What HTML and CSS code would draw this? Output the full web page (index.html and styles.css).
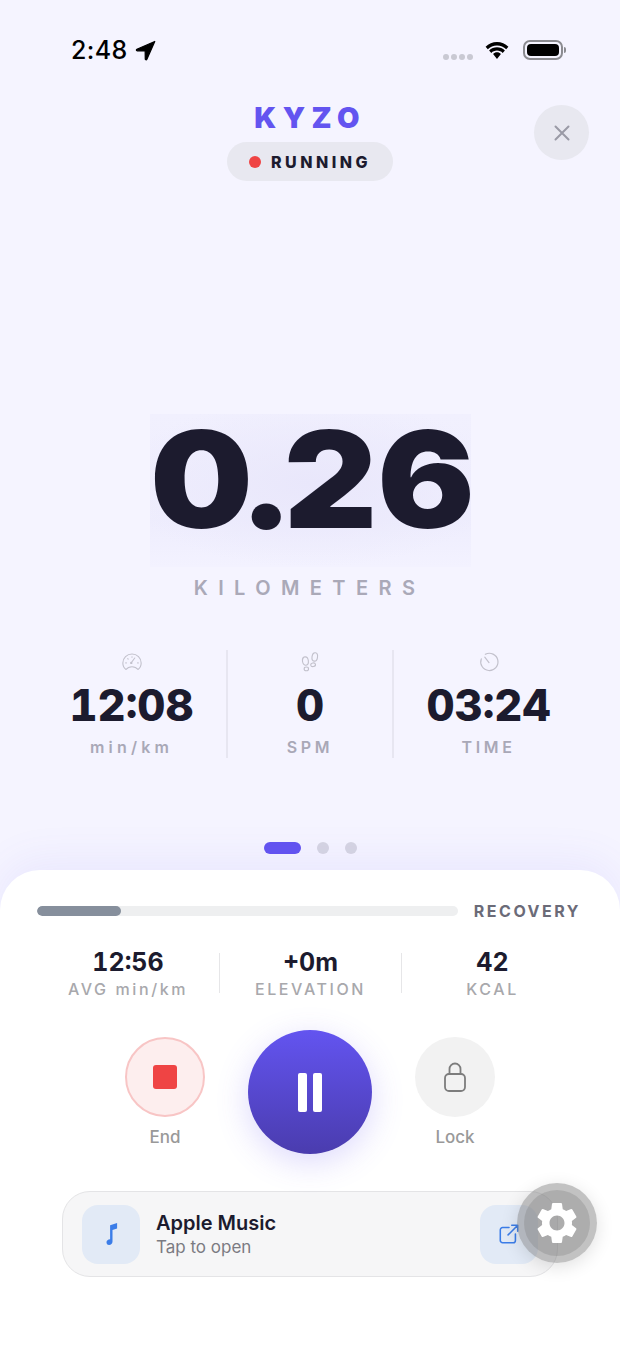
FILE: index.html
```html
<!DOCTYPE html>
<html lang="en">
<head>
<meta charset="utf-8">
<title>Kyzo run</title>
<link rel="stylesheet" href="styles.css">
</head>
<body>
<div class="page">
  <div class="status">
    <div class="status-left">
      <span class="clock">2:48</span>
      <svg class="loc" viewBox="0 0 20 20"><path d="M18.800 1.400 1.800 8.800c-.8.400-.6 1.500.3 1.500l7.600.1.100 7.600c0 .9 1.100 1.100 1.500.3Z" fill="#000" stroke="#000" stroke-width="1.200" stroke-linejoin="round"/></svg>
    </div>
    <div class="status-right">
      <div class="signal"><i></i><i></i><i></i><i></i></div>
      <svg class="wifi" viewBox="0 0 26 19"><path d="M13 4.600c3.600 0 6.800 1.400 9.200 3.700l2.200-2.500C21.400 2.800 17.400 1 13 1S4.600 2.800 1.600 5.800l2.200 2.500C6.200 6 9.400 4.600 13 4.600Z" fill="#000"/><path d="M13 9.600c2.200 0 4.200.9 5.700 2.300l2.200-2.500C18.800 7.400 16 6.200 13 6.200S7.200 7.400 5.100 9.400l2.200 2.500C8.800 10.500 10.800 9.600 13 9.600Z" fill="#000"/><path d="M13 11.300c-1.500 0-2.900.6-3.900 1.600L13 18l3.900-5.100c-1-1-2.400-1.600-3.900-1.600Z" fill="#000"/></svg>
      <div class="battery"><div class="battery-body"><div class="battery-fill"></div></div><div class="battery-nub"></div></div>
    </div>
  </div>

  <header class="head">
    <div class="head-side"></div>
    <div class="head-center">
      <div class="brand">KYZO</div>
      <div class="pill"><span class="pill-dot"></span><span class="pill-text">RUNNING</span></div>
    </div>
    <div class="head-side head-end">
      <button class="close" aria-label="Close">
        <svg viewBox="0 0 16 16" class="close-x"><path d="M1.500 1.500l13 13M14.500 1.500l-13 13" stroke="#9a9aa6" stroke-width="2" stroke-linecap="round" fill="none"/></svg>
      </button>
    </div>
  </header>

  <main class="main">
    <div class="distance"><span class="distance-text">0<span class="point">.</span>26</span></div>
    <div class="unit">KILOMETERS</div>
    <div class="stats">
      <div class="stat stat-a">
        <svg class="stat-icon" viewBox="0 0 24 24"><g fill="none" stroke="#c2c1cc" stroke-width="1.200" stroke-linecap="round" stroke-linejoin="round"><path d="M5.500 20.200C3.400 18.600 2 15.900 2 13 2 7.500 6.500 3.200 12 3.200S22 7.500 22 13c0 2.900-1.400 5.600-3.500 7.200-1.400-1.900-3.800-3.100-6.500-3.100s-5.100 1.200-6.500 3.100Z"/><path d="M11.400 12.600 15 7.600"/><circle cx="11.200" cy="13" r=".7"/><path d="M5.200 13h.6M18.200 13h.6M7.400 8.400l.4.4M12 6.200v.6"/></g></svg>
        <div class="stat-value">12:08</div>
        <div class="stat-label lower">min/km</div>
      </div>
      <div class="stat stat-b">
        <svg class="stat-icon" viewBox="0 0 24 24"><g fill="none" stroke="#c2c1cc" stroke-width="1.200"><ellipse cx="7" cy="11" rx="3.200" ry="4.600" transform="rotate(-8 7 11)"/><ellipse cx="8" cy="19.500" rx="2.400" ry="2"/><ellipse cx="17.200" cy="6.500" rx="3" ry="4.600" transform="rotate(8 17.200 6.500)"/><ellipse cx="15.400" cy="15" rx="2.600" ry="2" transform="rotate(-12 15.400 15)"/></g></svg>
        <div class="stat-value">0</div>
        <div class="stat-label">SPM</div>
      </div>
      <div class="stat stat-c">
        <svg class="stat-icon" viewBox="0 0 24 24"><g fill="none" stroke="#c2c1cc" stroke-width="1.300" stroke-linecap="round"><path d="M8 3.600a9.400 9.400 0 1 1-4.400 5"/><path d="M12 12.600 7.400 6.800"/></g></svg>
        <div class="stat-value">03:24</div>
        <div class="stat-label">TIME</div>
      </div>
    </div>
    <div class="pager"><span class="pager-on"></span><span class="pager-dot"></span><span class="pager-dot"></span></div>
  </main>

  <section class="sheet">
    <div class="progress-row">
      <div class="track"><div class="track-fill"></div></div>
      <div class="progress-label">RECOVERY</div>
    </div>
    <div class="minis">
      <div class="mini"><div class="mini-value">12:56</div><div class="mini-label">AVG min/km</div></div>
      <div class="mini"><div class="mini-value">+0m</div><div class="mini-label">ELEVATION</div></div>
      <div class="mini"><div class="mini-value">42</div><div class="mini-label">KCAL</div></div>
    </div>
    <div class="controls">
      <div class="ctrl">
        <button class="round round-end" aria-label="End"><span class="stop"></span></button>
        <div class="ctrl-label">End</div>
      </div>
      <button class="pause" aria-label="Pause"><span class="bar"></span><span class="bar"></span></button>
      <div class="ctrl">
        <button class="round round-lock" aria-label="Lock">
          <svg class="lock" viewBox="0 0 24 32"><g fill="none" stroke="#7d7d7d" stroke-width="1.800"><rect x="2" y="13" width="20" height="17" rx="4"/><path d="M6.500 13V8a5.500 5.500 0 0 1 11 0v5"/></g></svg>
        </button>
        <div class="ctrl-label">Lock</div>
      </div>
    </div>
    <div class="music">
      <div class="tile">
        <svg class="note" viewBox="0 0 14 24"><path d="M5.600 3.200 12.600 1v5.600L8 8v11.500c0 2-1.600 3.500-3.400 3.500S2 21.800 2 20.200s1.500-3 3.600-3Z" fill="#3b7de8"/></svg>
      </div>
      <div class="music-text">
        <div class="music-title">Apple Music</div>
        <div class="music-sub">Tap to open</div>
      </div>
      <div class="tile">
        <svg class="ext" viewBox="0 0 24 24"><g fill="none" stroke="#3b7de8" stroke-width="1.700" stroke-linecap="round" stroke-linejoin="round"><path d="M12 5H5a2.500 2.500 0 0 0-2.500 2.500V19A2.500 2.500 0 0 0 5 21.500h11.500A2.500 2.500 0 0 0 19 19v-7"/><path d="M11 13 21.500 2.500M15 2.500h6.500V9"/></g></svg>
      </div>
    </div>
    <div class="assist">
      <div class="assist-inner">
        <svg class="gear" viewBox="0 0 24 24"><path fill="#fff" d="M19.14 12.94c.04-.3.06-.61.06-.94 0-.32-.02-.64-.07-.94l2.03-1.58c.18-.14.23-.41.12-.61l-1.92-3.32c-.12-.22-.37-.29-.59-.22l-2.39.96c-.5-.38-1.03-.7-1.62-.94l-.36-2.54c-.04-.24-.24-.41-.48-.41h-3.84c-.24 0-.43.17-.47.41l-.36 2.54c-.59.24-1.13.57-1.62.94l-2.39-.96c-.22-.08-.47 0-.59.22L2.74 8.87c-.12.21-.08.47.12.61l2.03 1.58c-.05.3-.09.63-.09.94s.02.64.07.94l-2.03 1.58c-.18.14-.23.41-.12.61l1.92 3.32c.12.22.37.29.59.22l2.39-.96c.5.38 1.03.7 1.62.94l.36 2.54c.05.24.24.41.48.41h3.84c.24 0 .44-.17.47-.41l.36-2.54c.59-.24 1.13-.56 1.62-.94l2.39.96c.22.08.47 0 .59-.22l1.92-3.32c.12-.22.07-.47-.12-.61l-2.01-1.58zM12 15.600c-1.980 0-3.600-1.620-3.600-3.600s1.620-3.600 3.600-3.600 3.600 1.620 3.600 3.600-1.620 3.600-3.600 3.600z"/></svg>
      </div>
    </div>
  </section>
</div>
</body>
</html>
```

FILE: styles.css
```css
* { box-sizing: border-box; }
html, body { margin: 0; padding: 0; }
body { font-family: Inter, "Liberation Sans", sans-serif; background: #f5f4ff; }
button { border: 0; padding: 0; font: inherit; cursor: pointer; }

.page {
  width: 620px;
  height: 1348px;
  display: flex;
  flex-direction: column;
  overflow: hidden;
  background: #f5f4ff;
}

/* status bar */
.status {
  height: 99px;
  padding: 36px 54px 0 71px;
  display: flex;
  justify-content: space-between;
  align-items: flex-start;
  flex: none;
}
.status-left { display: flex; align-items: center; gap: 7px; }
.clock { font-size: 25px; font-weight: 500; line-height: 28px; letter-spacing: 0.4px; color: #000; }
.loc { width: 21px; height: 21px; margin-top: 1px; }
.status-right { display: flex; align-items: flex-start; margin-top: 4px; }
.signal { display: flex; gap: 2px; margin-top: 14px; margin-right: 11px; }
.signal i { width: 6px; height: 6px; border-radius: 50%; background: #c9c9d3; }
.wifi { width: 26px; height: 19px; margin-top: 1px; margin-right: 13px; }
.battery { display: flex; align-items: center; }
.battery-body { width: 40px; height: 20px; border: 2px solid #8b8b90; border-radius: 7px; padding: 2px; }
.battery-fill { height: 100%; border-radius: 4px; background: #000; }
.battery-nub { width: 2px; height: 6px; margin-left: 1px; border-radius: 0 2px 2px 0; background: #8b8b90; }

/* header */
.head { display: grid; grid-template-columns: 1fr auto 1fr; flex: none; }
.head-center { display: flex; flex-direction: column; align-items: center; }
.head-end { display: flex; justify-content: flex-end; padding-right: 31px; padding-top: 6px; }
.brand { font-size: 29px; font-weight: 900; line-height: 36px; letter-spacing: 6.3px; color: #6354f0; margin-top: 1px; }
.pill {
  margin-top: 6px;
  height: 39px;
  width: 166px;
  border-radius: 20px;
  background: #e8e8f0;
  display: flex;
  align-items: center;
  gap: 10px;
  padding-left: 22px;
}
.pill-dot { width: 12px; height: 12px; border-radius: 50%; background: #ef4444; }
.pill-text { font-size: 16px; font-weight: 800; letter-spacing: 3.5px; color: #1c1b2e; }
.close {
  width: 55px;
  height: 55px;
  border-radius: 50%;
  background: #e8e8f0;
  display: flex;
  align-items: center;
  justify-content: center;
}
.close-x { width: 16px; height: 16px; }

/* main */
.main { flex: 1; display: flex; flex-direction: column; align-items: center; min-height: 0; }
.distance {
  margin-top: 233px;
  width: 321px;
  height: 153px;
  padding: 0 0 23px 4px;
  font-size: 134px;
  line-height: 130px;
  font-weight: 900;
  text-align: center;
  white-space: nowrap;
  color: #1c1b2e;
  background:
    radial-gradient(ellipse 60% 55% at 50% 45%, #e9e7fb 0%, rgba(233, 231, 251, 0) 100%),
    linear-gradient(180deg, #f1f0fe 0%, #eeedfd 70%, #f3f2ff 100%);
}
.distance-text { display: inline-block; transform: scaleX(1.08); }
.point { margin: 0 -9px 0 -12.5px; }
.unit {
  margin-top: 9px;
  font-size: 20px;
  line-height: 24px;
  font-weight: 600;
  letter-spacing: 10.4px;
  color: #aaa9b8;
  margin-right: 1px;
}
.stats { margin-top: 50px; width: 546px; display: grid; grid-template-columns: 189px 168px 189px; height: 108px; }
.stat { display: flex; flex-direction: column; align-items: center; }
.stat-b { border-left: 2px solid #e7e6f1; border-right: 2px solid #e7e6f1; }
.stat-icon { width: 22px; height: 22px; margin-top: 1px; }
.stat-value { font-size: 43.5px; line-height: 52px; font-weight: 800; font-variant-numeric: tabular-nums; color: #1c1b2e; margin-top: 6px; white-space: nowrap; }
.stat-label { font-size: 16px; line-height: 20px; font-weight: 600; letter-spacing: 3.6px; color: #a9a8b7; margin-top: 6px; }
.stat-label.lower { letter-spacing: 4.2px; }
.pager { margin-top: 84px; display: flex; align-items: center; gap: 16px; }
.pager-on { width: 37px; height: 12px; border-radius: 6px; background: #6354f0; }
.pager-dot { width: 12px; height: 12px; border-radius: 50%; background: #d6d5e2; }

/* sheet */
.sheet {
  position: relative;
  flex: none;
  height: 478px;
  background: #fff;
  border-radius: 40px 40px 0 0;
  box-shadow: 0 -10px 40px rgba(99, 84, 240, 0.08);
  padding-top: 36px;
}
.progress-row { display: flex; align-items: center; gap: 16px; padding: 0 39px 0 37px; height: 10px; }
.track { flex: 1; height: 10px; border-radius: 5px; background: #eeeff0; overflow: hidden; }
.track-fill { width: 20%; height: 100%; border-radius: 5px; background: #868f9c; }
.progress-label { font-size: 16px; line-height: 20px; font-weight: 700; letter-spacing: 2.5px; color: #6b6b78; }
.minis { margin: 33px 37px 0; display: grid; grid-template-columns: repeat(3, 182px); height: 50px; }
.mini { display: flex; flex-direction: column; align-items: center; border-left: 1px solid #e6e6e8; height: 40px; margin-top: 4px; }
.mini:first-child { border-left: 0; }
.mini-value { font-size: 25px; line-height: 30px; font-weight: 700; font-variant-numeric: tabular-nums; color: #1c1b2e; margin-top: -6px; }
.mini-label { font-size: 16px; line-height: 20px; font-weight: 500; letter-spacing: 2.6px; color: #a8a8ac; margin-top: 2px; white-space: nowrap; }

.controls { margin-top: 31px; display: flex; justify-content: center; align-items: flex-start; gap: 43px; }
.ctrl { display: flex; flex-direction: column; align-items: center; padding-top: 7px; }
.round { width: 80px; height: 80px; border-radius: 50%; display: flex; align-items: center; justify-content: center; }
.round-end { background: #fdeeee; border: 2.5px solid #f8c5c5; }
.round-lock { background: #f2f2f2; }
.stop { width: 24px; height: 24px; border-radius: 3px; background: #ef4444; }
.lock { width: 24px; height: 32px; }
.ctrl-label { margin-top: 10px; font-size: 17px; line-height: 20px; font-weight: 500; color: #999; }
.pause {
  width: 124px;
  height: 124px;
  border-radius: 50%;
  background: linear-gradient(180deg, #6354f0 0%, #4a3cae 100%);
  box-shadow: 0 8px 32px rgba(99, 84, 240, 0.22);
  display: flex;
  align-items: center;
  justify-content: center;
  gap: 6px;
}
.bar { width: 9px; height: 39px; border-radius: 2px; background: #fff; }

.music {
  margin: 37px 62px 0;
  height: 86px;
  border-radius: 28px;
  background: #f6f6f7;
  border: 1px solid #e4e4e6;
  padding: 0 19px;
  display: flex;
  align-items: center;
  gap: 16px;
}
.tile { width: 58px; height: 59px; border-radius: 16px; background: #e2eaf6; display: flex; align-items: center; justify-content: center; flex: none; }
.note { width: 15px; height: 24px; }
.ext { width: 22px; height: 22px; }
.music-text { flex: 1; }
.music-title { font-size: 20px; line-height: 26px; font-weight: 600; color: #1c1b2e; }
.music-sub { font-size: 17px; line-height: 22px; color: #7b7b82; }

.assist {
  position: absolute;
  left: 517px;
  top: 313px;
  width: 80px;
  height: 80px;
  border-radius: 50%;
  background: rgba(120, 120, 120, 0.45);
  box-shadow: 0 4px 18px rgba(0, 0, 0, 0.12);
  display: flex;
  align-items: center;
  justify-content: center;
}
.assist-inner {
  width: 66px;
  height: 66px;
  border-radius: 50%;
  background: rgba(120, 120, 120, 0.28);
  display: flex;
  align-items: center;
  justify-content: center;
}
.gear { width: 50px; height: 50px; }
```
